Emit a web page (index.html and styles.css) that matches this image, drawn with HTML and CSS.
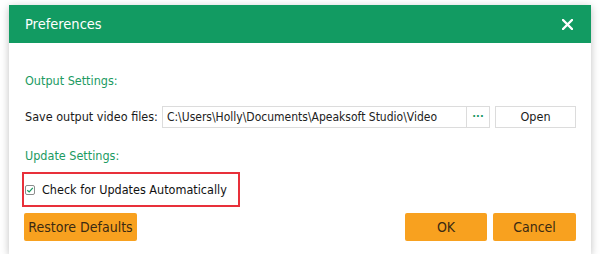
FILE: index.html
```html
<!DOCTYPE html>
<html lang="en">
<head>
    <meta charset="UTF-8">
    <title>Preferences</title>
    <link rel="stylesheet" href="styles.css">
</head>
<body>
    <div class="dialog">
        <div class="header">
            <span class="title">Preferences</span>
            <svg class="close" width="11" height="11" viewBox="0 0 11 11">
                <path d="M1 1 L10 10 M10 1 L1 10" stroke="#fff" stroke-width="2.4" stroke-linecap="round"/>
            </svg>
        </div>
        <div class="content">
            <div class="section-title first">Output Settings:</div>
            <div class="path-row">
                <span class="path-label">Save output video files:</span>
                <div class="path-box">C:\Users\Holly\Documents\Apeaksoft Studio\Video</div>
                <div class="browse">&middot;&middot;&middot;</div>
                <div class="open-btn">Open</div>
            </div>
            <div class="section-title second">Update Settings:</div>
            <div class="highlight">
                <span class="checkbox">
                    <svg width="8" height="8" viewBox="0 0 8 8">
                        <path d="M1.3 4.2 L3.2 6 L6.8 1.8" fill="none" stroke="#1b9a62" stroke-width="1.2"/>
                    </svg>
                </span>
                <span class="check-label">Check for Updates Automatically</span>
            </div>
            <div class="footer">
                <button class="btn restore">Restore Defaults</button>
                <div class="actions">
                    <button class="btn ok">OK</button>
                    <button class="btn cancel">Cancel</button>
                </div>
            </div>
        </div>
    </div>
</body>
</html>
```

FILE: styles.css
```css
body {
    margin: 0;
    background-color: #fff;
    font-family: "DejaVu Sans Condensed", "DejaVu Sans", sans-serif;
    font-size: 12.5px;
    color: #1a1a1a;
}

.dialog {
    width: 582px;
    height: 249px;
    margin: 5px 0 0 9px;
    background-color: #fff;
    box-shadow: 0 2px 8px rgba(0, 0, 0, 0.25);
}

.header {
    height: 38px;
    background-color: #129b62;
    display: flex;
    align-items: center;
    justify-content: space-between;
    padding: 0 18px 0 16px;
}

.title {
    color: #fff;
    font-size: 14.5px;
}

.close {
    display: block;
}

.content {
    padding: 0 15px 0 16px;
}

.section-title {
    color: #1b9a62;
    line-height: 16px;
}

.section-title.first {
    padding-top: 30px;
}

.section-title.second {
    margin-top: 20px;
}

.path-row {
    display: flex;
    align-items: stretch;
    height: 22px;
    margin-top: 17px;
}

.path-label {
    line-height: 22px;
    margin-right: 4px;
}

.path-box {
    flex: 1;
    border: 1px solid #dcdcdc;
    padding-left: 4px;
    line-height: 20px;
    font-size: 12px;
    color: #222;
}

.browse {
    width: 22px;
    border: 1px solid #dcdcdc;
    border-left: none;
    color: #1b9a62;
    text-align: center;
    line-height: 20px;
    font-weight: bold;
    font-size: 11px;
}

.open-btn {
    width: 79px;
    margin-left: 5px;
    border: 1px solid #dcdcdc;
    text-align: center;
    line-height: 20px;
}

.highlight {
    display: flex;
    align-items: center;
    width: 214px;
    height: 31px;
    margin: 8px 0 0 -3px;
    border: 2px solid #e8303a;
}

.checkbox {
    width: 8px;
    height: 8px;
    margin-left: 1px;
    border: 1px solid #8c8c8c;
    border-radius: 2px;
    display: flex;
    align-items: center;
    justify-content: center;
}

.check-label {
    margin-left: 7px;
    color: #111;
}

.footer {
    display: flex;
    justify-content: space-between;
    margin-top: 6px;
}

.actions {
    display: flex;
    gap: 6px;
}

.btn {
    height: 28px;
    border: none;
    border-radius: 2px;
    background-color: #f8a11f;
    color: #3b2a12;
    font-family: "DejaVu Sans Condensed", "DejaVu Sans", sans-serif;
    font-size: 14px;
    padding: 0;
}

.restore {
    width: 113px;
    margin-left: -1px;
}

.ok {
    width: 82px;
}

.cancel {
    width: 83px;
}
```
